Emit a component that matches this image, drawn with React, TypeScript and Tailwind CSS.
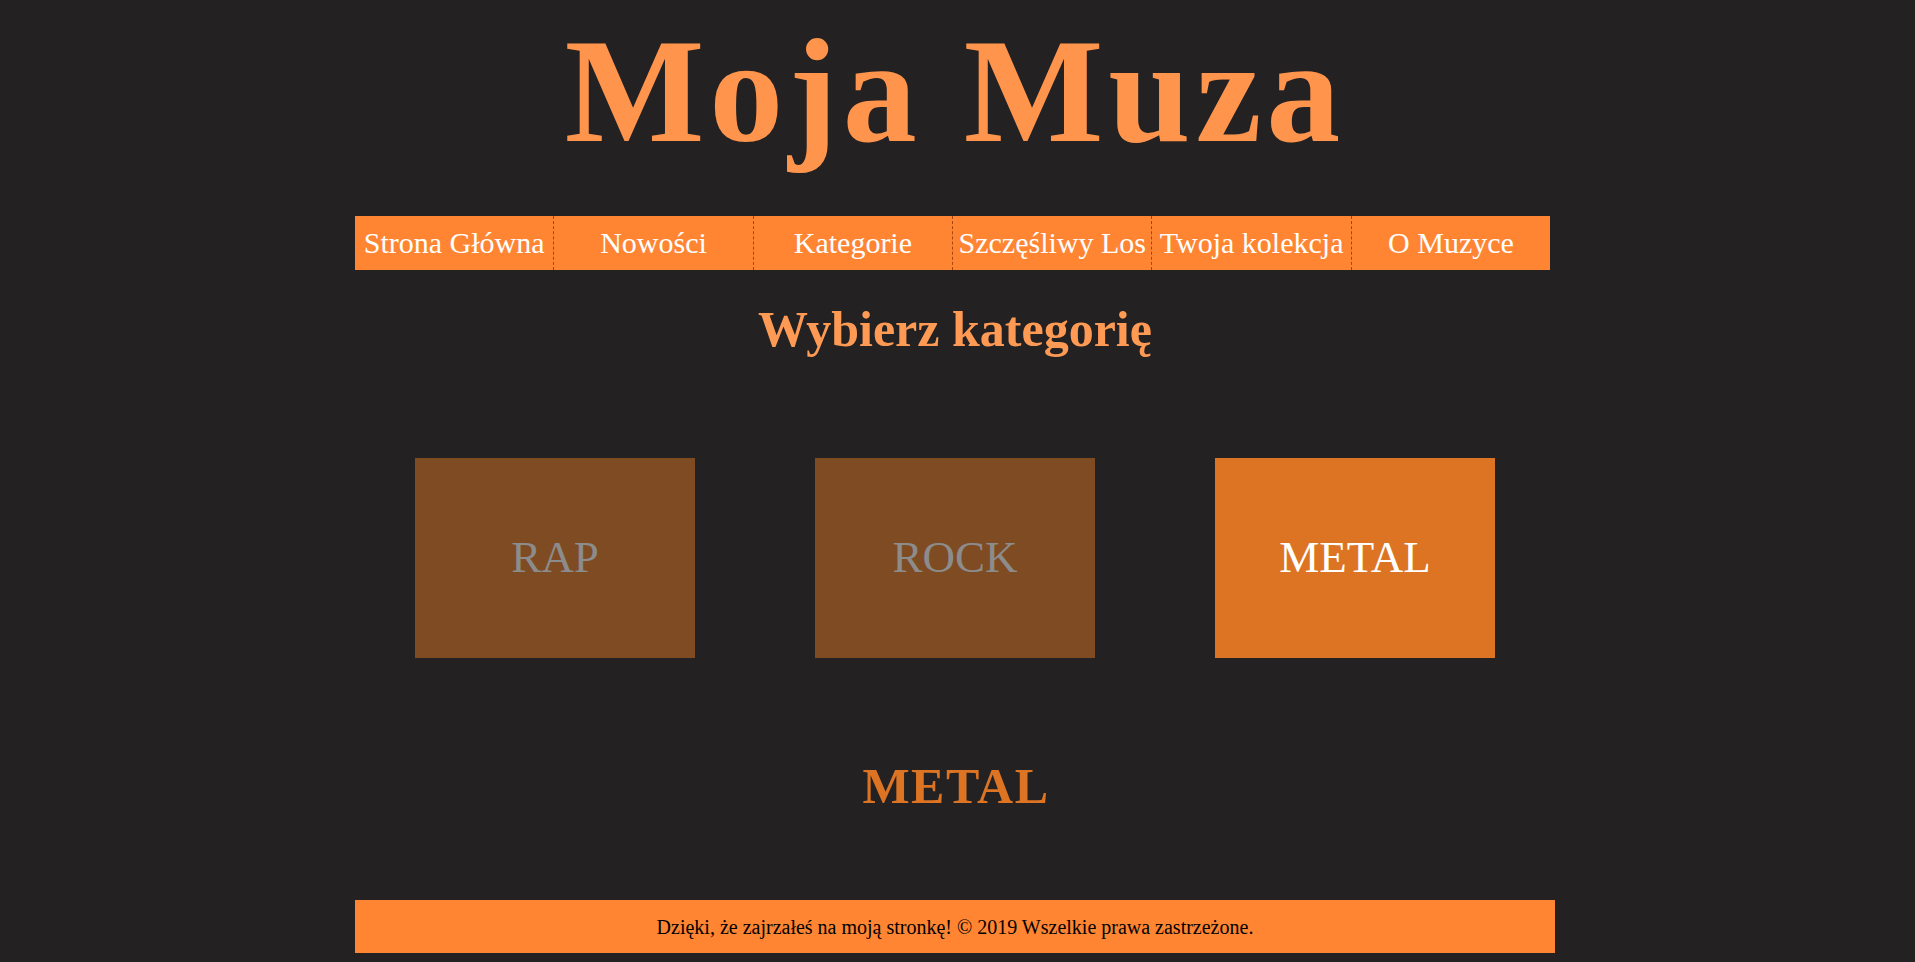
const navItems = ['Strona Główna', 'Nowości', 'Kategorie', 'Szczęśliwy Los', 'Twoja kolekcja', 'O Muzyce'];

const categories = [
  { name: 'RAP', active: false },
  { name: 'ROCK', active: false },
  { name: 'METAL', active: true },
];

export default function App() {
  return (
    <div
      className="min-h-screen bg-[#232122] flex justify-center pr-[5px]"
      style={{ fontFamily: "'Liberation Serif', 'Times New Roman', serif" }}
    >
      <div className="w-[1200px] flex flex-col">
        {/* Logo */}
        <h1 className="pt-[9px] text-center text-[148px] leading-[164px] font-bold tracking-[5px] text-[#ff944d]">
          Moja Muza
        </h1>

        {/* Menu */}
        <nav className="mt-[43px] flex w-[99.6%] h-[54px] bg-[#ff8533]">
          {navItems.map((item, i) => (
            <a
              key={item}
              href="#"
              className={
                'flex-1 text-center text-[30px] leading-[54px] text-white whitespace-nowrap ' +
                (i > 0 ? 'border-l border-dashed border-[#a6460f]' : '')
              }
            >
              {item}
            </a>
          ))}
        </nav>

        <h2 className="mt-[31px] text-center text-[50px] leading-[56px] font-bold text-[#ff9a55]">
          Wybierz kategorię
        </h2>

        {/* Categories */}
        <div className="mt-[101px] flex justify-center gap-[120px]">
          {categories.map((c) => (
            <div
              key={c.name}
              className={
                c.active
                  ? 'w-[280px] h-[200px] flex items-center justify-center bg-[#dd7423] text-white text-[45px]'
                  : 'w-[280px] h-[200px] flex items-center justify-center bg-[#7f4b22] text-[#8c8c8c] text-[45px]'
              }
            >
              {c.name}
            </div>
          ))}
        </div>

        <h2 className="mt-[100px] pl-[2px] text-center text-[50px] leading-[56px] font-bold tracking-[1.5px] text-[#dd7423]">
          METAL
        </h2>

        {/* Footer */}
        <footer className="mt-[86px] h-[53px] pt-px bg-[#ff8533] text-center text-[20px] leading-[52px] text-black">
          Dzięki, że zajrzałeś na moją stronkę! © 2019 Wszelkie prawa zastrzeżone.
        </footer>
      </div>
    </div>
  );
}
